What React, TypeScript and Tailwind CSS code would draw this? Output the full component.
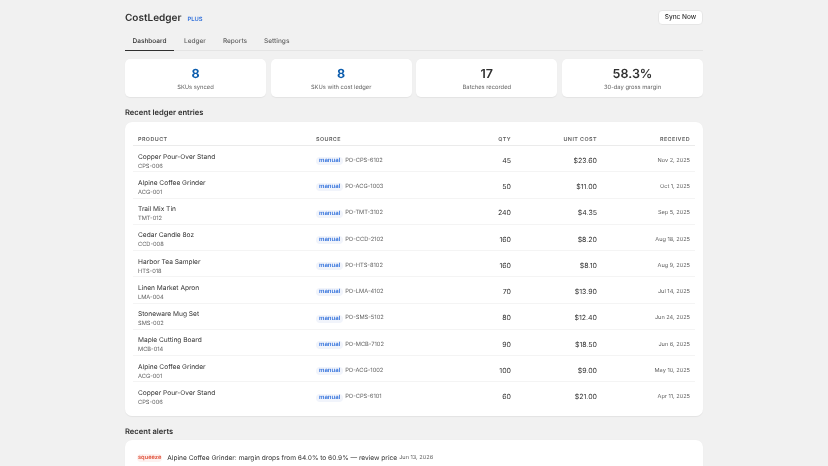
const stats = [
  { value: "8", label: "SKUs synced", blue: true },
  { value: "8", label: "SKUs with cost ledger", blue: true },
  { value: "17", label: "Batches recorded", blue: false },
  { value: "58.3%", label: "30-day gross margin", blue: false },
]

const entries = [
  { name: "Copper Pour-Over Stand", sku: "CPS-006", po: "PO-CPS-6102", qty: 45, cost: "$23.60", date: "Nov 2, 2025" },
  { name: "Alpine Coffee Grinder", sku: "ACG-001", po: "PO-ACG-1003", qty: 50, cost: "$11.00", date: "Oct 1, 2025" },
  { name: "Trail Mix Tin", sku: "TMT-012", po: "PO-TMT-3102", qty: 240, cost: "$4.35", date: "Sep 5, 2025" },
  { name: "Cedar Candle 8oz", sku: "CCD-008", po: "PO-CCD-2102", qty: 160, cost: "$8.20", date: "Aug 18, 2025" },
  { name: "Harbor Tea Sampler", sku: "HTS-018", po: "PO-HTS-8102", qty: 160, cost: "$8.10", date: "Aug 9, 2025" },
  { name: "Linen Market Apron", sku: "LMA-004", po: "PO-LMA-4102", qty: 70, cost: "$13.90", date: "Jul 14, 2025" },
  { name: "Stoneware Mug Set", sku: "SMS-002", po: "PO-SMS-5102", qty: 80, cost: "$12.40", date: "Jun 24, 2025" },
  { name: "Maple Cutting Board", sku: "MCB-014", po: "PO-MCB-7102", qty: 90, cost: "$18.50", date: "Jun 6, 2025" },
  { name: "Alpine Coffee Grinder", sku: "ACG-001", po: "PO-ACG-1002", qty: 100, cost: "$9.00", date: "May 10, 2025" },
  { name: "Copper Pour-Over Stand", sku: "CPS-006", po: "PO-CPS-6101", qty: 60, cost: "$21.00", date: "Apr 11, 2025" },
]

const tabs = ["Dashboard", "Ledger", "Reports", "Settings"]

export default function App() {
  return (
    <div className="h-[466px] overflow-hidden bg-[#f1f1f1] font-['Inter',sans-serif] text-[#303030] [text-rendering:geometricPrecision] antialiased">
      <div className="mx-auto w-[578px] pt-[10px] will-change-transform">
        <div className="flex h-[15px] items-center justify-between">
          <div className="mt-[2px] flex items-center gap-[6px]">
            <h1 className="text-[10px] leading-[15px] font-semibold">CostLedger</h1>
            <span className="mt-[2px] text-[5.8px] leading-[8px] font-semibold text-[#2f6fdb]">PLUS</span>
          </div>
          <button className="h-[15.5px] w-[45px] rounded-[4px] border border-[#e6e6e6] bg-white text-[6.5px] font-medium text-[#303030]">
            Sync Now
          </button>
        </div>

        <div className="mt-[8.5px] flex h-[17px] items-start border-b border-[#e4e4e4]">
          {tabs.map((tab, i) => (
            <div
              key={tab}
              className={
                i === 0
                  ? "h-[17px] w-[49px] border-b-[1.5px] border-[#303030] pt-[2.5px] text-center text-[6.5px] leading-[10px] font-medium text-[#303030]"
                  : "pt-[2.5px] pl-[10px] pr-[7px] text-[6.5px] leading-[10px] font-medium text-[#616161]"
              }
            >
              {tab}
            </div>
          ))}
        </div>

        <div className="mt-[8px] grid grid-cols-4 gap-[4.7px]">
          {stats.map((s) => (
            <div key={s.label} className="flex h-[38.5px] flex-col items-center rounded-[5px] bg-white pt-[8.5px] shadow-[0_0.5px_1px_rgba(0,0,0,0.06)]">
              <div className={s.blue ? "text-[12.5px] leading-[15px] font-bold text-[#0b5cad]" : "text-[12.5px] leading-[15px] font-semibold text-[#303030]"}>
                {s.value}
              </div>
              <div className="mt-[1.5px] text-[5.8px] leading-[8px] text-[#616161]">{s.label}</div>
            </div>
          ))}
        </div>

        <h2 className="mt-[9.5px] text-[7.6px] leading-[12px] font-semibold">Recent ledger entries</h2>

        <div className="mt-[3px] rounded-[7px] bg-white px-[8px] pt-[8px] pb-[8px] shadow-[0_0.5px_1px_rgba(0,0,0,0.06)]">
          <table className="w-full table-fixed border-collapse">
            <thead>
              <tr className="h-[16px] border-b border-[#ebebeb] text-[5.4px] font-semibold tracking-[0.08em] text-[#616161]">
                <th className="w-[183px] pt-[5px] pl-[5px] text-left font-semibold">PRODUCT</th>
                <th className="pt-[5px] text-left font-semibold">SOURCE</th>
                <th className="w-[60px] pt-[5px] text-right font-semibold">QTY</th>
                <th className="w-[86px] pt-[5px] text-right font-semibold">UNIT COST</th>
                <th className="w-[98px] pt-[5px] pr-[5px] text-right font-semibold">RECEIVED</th>
              </tr>
            </thead>
            <tbody>
              {entries.map((e, i) => (
                <tr key={e.po} className={i === entries.length - 1 ? "h-[26.25px]" : "h-[26.25px] border-b border-[#f4f4f4]"}>
                  <td className="pt-[5px] pl-[5px]">
                    <div className="text-[6.6px] leading-[10px] text-[#303030]">{e.name}</div>
                    <div className="text-[5.7px] leading-[9px] text-[#616161]">{e.sku}</div>
                  </td>
                  <td className="pt-[5px]">
                    <div className="flex items-center gap-[2px]">
                      <span className="rounded-full bg-[#f1f4fb] px-[3px] text-[6px] leading-[8px] font-semibold text-[#2f6fdb]">manual</span>
                      <span className="text-[5.7px] text-[#616161]">{e.po}</span>
                    </div>
                  </td>
                  <td className="pt-[5px] text-right text-[7px] text-[#303030]">{e.qty}</td>
                  <td className="pt-[5px] text-right text-[7px] text-[#303030]">{e.cost}</td>
                  <td className="pt-[5px] pr-[5px] text-right text-[5.6px] text-[#616161]">{e.date}</td>
                </tr>
              ))}
            </tbody>
          </table>
        </div>

        <h2 className="mt-[10px] text-[7.6px] leading-[12px] font-semibold">Recent alerts</h2>

        <div className="mt-[2px] rounded-[7px] bg-white px-[12px] py-[10.5px] shadow-[0_0.5px_1px_rgba(0,0,0,0.06)]">
          <div className="flex items-center text-[6.6px] leading-[14px]">
            <span className="mr-[5px] rounded-full bg-[#fdf1ef] px-[1px] text-[5.7px] leading-[8px] font-semibold text-[#e0533d]">squeeze</span>
            <span>Alpine Coffee Grinder: margin drops from 64.0% to 60.9% — review price</span>
            <span className="ml-[2px] text-[5.6px] text-[#616161]">Jun 13, 2026</span>
          </div>
        </div>
      </div>
    </div>
  )
}
